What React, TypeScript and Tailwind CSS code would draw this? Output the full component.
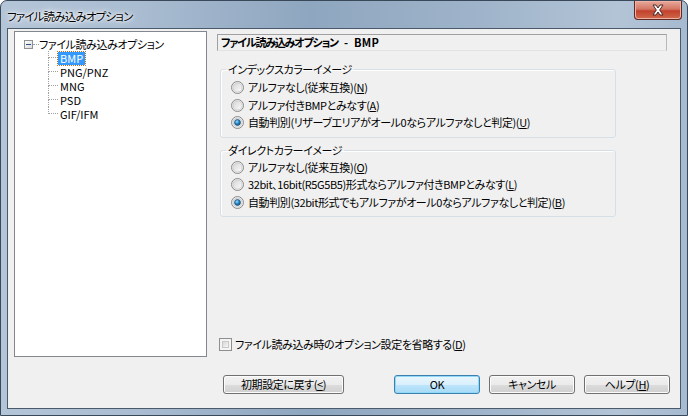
const jp = "font-['Noto_Sans_CJK_JP','Noto_Sans',sans-serif] [font-feature-settings:'palt']";
const txt = "text-[11px] tracking-[-0.4px] leading-[13px] text-black";

function Radio({ checked }: { checked?: boolean }) {
  return (
    <svg width="13" height="13" viewBox="0 0 13 13" className="shrink-0">
      <defs>
        <linearGradient id="rfill" x1="0" y1="0" x2="1" y2="1">
          <stop offset="0" stopColor="#d6d6d6" />
          <stop offset="1" stopColor="#fbfbfb" />
        </linearGradient>
        <radialGradient id="rdot" cx="0.4" cy="0.35" r="0.7">
          <stop offset="0" stopColor="#9fdcff" />
          <stop offset="0.5" stopColor="#2a84c4" />
          <stop offset="1" stopColor="#0d4f80" />
        </radialGradient>
      </defs>
      <circle cx="6.5" cy="6.5" r="6" fill="#f4f4f4" stroke="#8a8a8a" />
      <circle cx="6.5" cy="6.5" r="4.6" fill="url(#rfill)" stroke="#c4c4c4" strokeWidth="0.8" />
      {checked && <circle cx="6.5" cy="6.5" r="3" fill="url(#rdot)" stroke="#1d4f76" strokeWidth="0.6" />}
    </svg>
  );
}

function RadioRow({ label, checked }: { label: React.ReactNode; checked?: boolean }) {
  return (
    <div className="flex h-[17.5px] items-center gap-[4px] pl-[10px]">
      <Radio checked={checked} />
      <span className={txt}>{label}</span>
    </div>
  );
}

function Group({ title, top, children }: { title: string; top: string; children: React.ReactNode }) {
  return (
    <fieldset className="w-[396px] rounded-[3px] border border-[#d5dfe5] pb-[5px] shadow-[inset_1px_1px_0_#ffffff]">
      <legend className={`ml-[5px] px-[2px] ${txt}`}>{title}</legend>
      <div className={top}>{children}</div>
    </fieldset>
  );
}

function Btn({ children, width, primary }: { children: React.ReactNode; width: string; primary?: boolean }) {
  return (
    <div
      className={`flex h-[19px] items-center justify-center rounded-[3px] border ${txt} ${width} ${
        primary
          ? "border-[#3c7fb1] bg-[linear-gradient(180deg,#eaf6fd_0%,#d9f0fc_50%,#bee6fd_51%,#a7d9f5_100%)] shadow-[inset_0_0_0_1px_#8fd8f8]"
          : "border-[#707070] bg-[linear-gradient(180deg,#f2f2f2_0%,#ebebeb_50%,#dddddd_51%,#cfcfcf_100%)] shadow-[inset_0_0_0_1px_#fcfcfc]"
      }`}
    >
      {children}
    </div>
  );
}

function U({ children }: { children: string }) {
  return <span className="underline underline-offset-[1px]">{children}</span>;
}

function TreeChild({ label, selected, last }: { label: string; selected?: boolean; last?: boolean }) {
  return (
    <div className="flex h-[14px] items-stretch">
      <div className="flex w-[10px] flex-col">
        <div className="h-[7px] border-b border-l border-dotted border-[#a0a0a0]" />
        <div className={`flex-1 ${last ? "" : "border-l border-dotted border-[#a0a0a0]"}`} />
      </div>
      <div className="flex items-center">
        <div
          className={`block h-[13px] px-[2px] text-[11px] leading-[13px] ${
            selected ? "bg-[#3399ff] text-white outline-1 outline-dotted outline-[#b0702c]" : "text-black"
          }`}
        >
          {label}
        </div>
      </div>
    </div>
  );
}

export default function App() {
  return (
    <div className={`${jp} flex h-[416px] w-[688px] flex-col overflow-hidden rounded-t-[7px] border border-[#3a4959] bg-[linear-gradient(90deg,#b4c5d8_0%,#a9bcd1_20%,#8ea6bf_45%,#9fb4ca_70%,#b3c4d6_90%,#a6bad0_100%)]`}>
      {/* title bar */}
      <div className="flex h-[27px] shrink-0 items-start">
        <div className="pl-[6px] pt-[8px] text-[11.5px] leading-[14px] tracking-[-0.8px] text-black [text-shadow:0_0_8px_#ffffff,0_0_4px_#ffffff,0_0_2px_#ffffff]">
          ファイル読み込みオプション
        </div>
        <div className="ml-auto mr-[5px] flex h-[19px] w-[48px] items-center justify-center rounded-b-[4px] border border-t-0 border-[#5e2a22] bg-[linear-gradient(180deg,#e8a99c_0%,#d47765_45%,#c2412c_55%,#d06a4c_100%)] shadow-[inset_0_0_0_1px_#eeb3a6]">
          <svg width="14" height="12" viewBox="0 0 14 12">
            <path d="M2 1h3l2 3 2-3h3l-3.3 5 3.3 5h-3l-2-3-2 3H2l3.3-5z" fill="#ffffff" stroke="#4a2a26" strokeWidth="1" strokeLinejoin="round" />
          </svg>
        </div>
      </div>

      {/* client area */}
      <div className="mx-[6px] flex flex-1 flex-col border border-[#4a5a6b] bg-[#f0f0f0]">
        <div className="flex pl-[6px] pt-[2px]">
          {/* tree */}
          <div className="h-[326px] w-[193px] shrink-0 border border-[#828790] bg-white pt-[5px] text-black">
            <div className="flex h-[14px] items-center pl-[9px]">
              <div className="flex h-[9px] w-[9px] items-center justify-center border border-[#919191] bg-[linear-gradient(135deg,#ffffff,#dcdcdc)]">
                <div className="h-[1px] w-[5px] bg-[#2d4f86]" />
              </div>
              <div className="h-0 w-[6px] border-t border-dotted border-[#a0a0a0]" />
              <div className="h-[13px] text-[11px] leading-[13px] tracking-[-0.4px]">ファイル読み込みオプション</div>
            </div>
            <div className="pl-[33px]">
              <TreeChild label="BMP" selected />
              <TreeChild label="PNG/PNZ" />
              <TreeChild label="MNG" />
              <TreeChild label="PSD" />
              <TreeChild label="GIF/IFM" last />
            </div>
          </div>

          {/* right panel */}
          <div className="ml-[10px] flex w-[450px] flex-col">
            <div className="mt-[3px] flex h-[17px] items-center gap-[6px] border border-[#a0a0a0] border-b-[#e3e3e3] border-r-[#b8b8b8] pl-[3px] text-[11px] font-bold leading-[13px] text-black">
              <span className="tracking-[-1.2px]">ファイル読み込みオプション</span>
              <span>-</span>
              <span className="tracking-[0.3px]">BMP</span>
            </div>

            <div className="ml-[3px] mt-[12px]">
              <Group title="インデックスカラーイメージ" top="pt-[3px]">
                <RadioRow label={<>アルファなし(従来互換)(<U>N</U>)</>} />
                <RadioRow label={<>アルファ付きBMPとみなす(<U>A</U>)</>} />
                <RadioRow checked label={<>自動判別(リザーブエリアがオール0ならアルファなしと判定)(<U>U</U>)</>} />
              </Group>
            </div>

            <div className="ml-[3px] mt-[6px]">
              <Group title="ダイレクトカラーイメージ" top="pt-[2px]">
                <RadioRow label={<>アルファなし(従来互換)(<U>O</U>)</>} />
                <RadioRow label={<>32bit、16bit(R5G5B5)形式ならアルファ付きBMPとみなす(<U>L</U>)</>} />
                <RadioRow checked label={<>自動判別(32bit形式でもアルファがオール0ならアルファなしと判定)(<U>B</U>)</>} />
              </Group>
            </div>

            <div className="mb-[6px] ml-[2px] mt-auto flex h-[14px] items-center gap-[3px]">
              <div className="h-[13px] w-[13px] border border-[#8f8f8f] bg-[#f4f4f4] p-[2px]">
                <div className="h-full w-full border border-[#c9c9c9] bg-[linear-gradient(135deg,#d8d8d8,#f6f6f6)]" />
              </div>
              <span className={txt}>
                ファイル読み込み時のオプション設定を省略する(<U>D</U>)
              </span>
            </div>
          </div>
        </div>

        {/* buttons */}
        <div className="mt-[18px] flex pl-[215px]">
          <Btn width="w-[121px]">
            初期設定に戻す(<U>&lt;</U>)
          </Btn>
          <div className="ml-[50px] flex gap-[9px]">
            <Btn width="w-[86px]" primary>
              OK
            </Btn>
            <Btn width="w-[86px]">キャンセル</Btn>
            <Btn width="w-[86px]">
              ヘルプ(<U>H</U>)
            </Btn>
          </div>
        </div>
      </div>
      <div className="h-[6px] shrink-0" />
    </div>
  );
}
